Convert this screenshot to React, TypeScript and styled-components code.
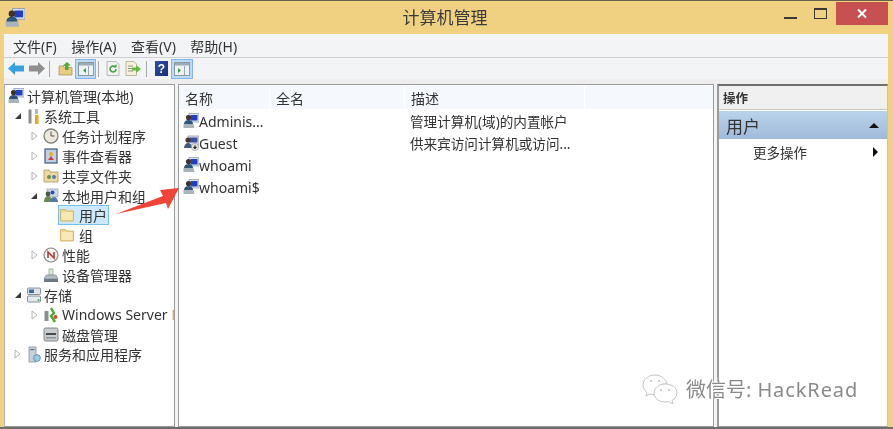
import React from 'react';
import styled, { createGlobalStyle } from 'styled-components';

const Global = createGlobalStyle`
    html, body { margin: 0; padding: 0; background: #ffffff; }
    body { font-family: "Noto Sans", "Noto Sans CJK SC", sans-serif; overflow: hidden; }
    #root { width: 893px; height: 429px; }
`;

const Win = styled.div`
    position: relative;
    width: 893px;
    height: 429px;
    box-sizing: border-box;
    background: #f0d181;
    border-top: 1px solid #6b6250;
    border-bottom: 2px solid #6d6d6d;
    display: flex;
    flex-direction: column;
    overflow: hidden;
    filter: blur(0.35px);
`;

const TitleBar = styled.div`
    height: 33px;
    flex: none;
    display: flex;
    align-items: flex-start;
    padding-left: 5px;
    position: relative;
`;

const AppIcon = styled.div`
    margin-top: 7px;
    width: 20px;
    height: 20px;
`;

const Title = styled.div`
    position: absolute;
    left: 0;
    right: 0;
    top: 6px;
    text-align: center;
    font-size: 17px;
    line-height: 22px;
    color: #3a3a3a;
    padding-right: 3px;
`;

const Controls = styled.div`
    margin-left: auto;
    display: flex;
    align-items: flex-start;
    margin-right: 5px;
`;

const MinBtn = styled.div`
    width: 13px;
    height: 2px;
    margin-top: 16px;
    background: #3d3a32;
    margin-right: 17px;
`;

const MaxBtn = styled.div`
    width: 11px;
    height: 8px;
    margin-top: 7px;
    border: 1px solid #3d3a32;
    border-top-width: 2px;
    margin-right: 9px;
`;

const CloseBtn = styled.div`
    width: 52px;
    height: 23px;
    margin-top: 1px;
    background: #c75050;
    display: flex;
    align-items: center;
    justify-content: center;
`;

const Body = styled.div`
    flex: 1;
    min-height: 0;
    margin: 0 5px 0 4px;
    background: #f3f4f6;
    display: flex;
    flex-direction: column;
`;

const MenuBar = styled.div`
    height: 24px;
    flex: none;
    box-sizing: border-box;
    display: flex;
    align-items: center;
    gap: 14.500px;
    padding-left: 9px;
    border-bottom: 1px solid #cfd0d2;
    font-size: 14px;
    color: #333;
`;

const ToolBar = styled.div`
    height: 21px;
    flex: none;
    display: flex;
    align-items: center;
    padding-left: 2px;
`;

const ToolBtn = styled.div<{ $on?: boolean; $w?: number }>`
    width: ${p => p.$w ?? 20}px;
    height: 20px;
    flex: none;
    box-sizing: border-box;
    display: flex;
    align-items: center;
    justify-content: center;
    background: ${p => (p.$on ? '#bcd9f6' : 'transparent')};
    border: 1px solid ${p => (p.$on ? '#83b5ec' : 'transparent')};
`;

const ToolSep = styled.div<{ $ml?: number; $mr?: number }>`
    width: 1px;
    height: 16px;
    background: #a8a8a8;
    margin: 0 ${p => p.$mr ?? 4}px 0 ${p => p.$ml ?? 2}px;
    flex: none;
`;

const Panes = styled.div`
    flex: 1;
    min-height: 0;
    display: flex;
    gap: 3px;
    padding-top: 5px;
    background: linear-gradient(#eeeeef, #eeeeef 5px, #f3f4f6 5px);
`;

const TreePane = styled.div`
    width: 171px;
    flex: none;
    box-sizing: border-box;
    background: #fff;
    border: 1px solid #9b9b9b;
    border-left-color: #b5b5b5;
    padding-top: 1.500px;
    overflow: hidden;
`;

const TreeRow = styled.div<{ $level: number }>`
    height: 19.850px;
    display: flex;
    align-items: center;
    padding-left: ${p => 3 + p.$level * 17}px;
    font-size: 14px;
    color: #333;
    white-space: nowrap;
    svg { flex: none; }
`;

const Twisty = styled.div<{ $w: number }>`
    width: ${p => p.$w}px;
    flex: none;
    display: flex;
    align-items: center;
    justify-content: center;
`;

const TreeLabel = styled.span`
    margin-left: 3px;
`;

const Cut = styled.span`
    color: #e0a468;
`;

const SelBox = styled.div`
    display: flex;
    align-items: center;
    box-sizing: border-box;
    height: 20px;
    width: 51px;
    background: #cde8f8;
    border: 1px solid #78c0e8;
    padding-left: 1px;
    margin-left: -2px;
`;

const ListPane = styled.div`
    width: 536px;
    flex: none;
    box-sizing: border-box;
    background: #fff;
    border: 1px solid #9b9b9b;
    overflow: hidden;
`;

const Header = styled.div`
    height: 24px;
    display: flex;
    background: linear-gradient(#f5f9fd, #f5f9fd 23px, #ffffff 23px);
    margin-top: 1px;
    font-size: 14px;
    color: #333;
`;

const HeadCell = styled.div<{ $w: number }>`
    width: ${p => p.$w}px;
    flex: none;
    box-sizing: border-box;
    padding-left: 6px;
    line-height: 25px;
    border-right: 1px solid #ffffff;
`;

const ListRow = styled.div`
    height: 22px;
    display: flex;
    align-items: center;
    font-size: 14px;
    color: #333;
`;

const NameCell = styled.div`
    width: 227px;
    flex: none;
    padding-left: 4px;
    display: flex;
    align-items: center;
`;

const DescCell = styled.div`
    font-size: 13.600px;
`;

const ActionPane = styled.div`
    flex: 1;
    box-sizing: border-box;
    background: #fff;
    border-top: 2px solid #6f6f6f;
    border-left: 2px solid #9b9b9b;
    border-bottom: 1px solid #9b9b9b;
    border-right: 1px solid #c4c4c4;
    overflow: hidden;
`;

const ActionHead = styled.div`
    height: 23px;
    background: #f0f0f0;
    border-bottom: 1px solid #c8c8c8;
    font-size: 12.500px;
    font-weight: 700;
    line-height: 25px;
    padding-left: 4px;
    color: #333;
`;

const ActionGroup = styled.div`
    height: 28px;
    margin-top: 1px;
    background: linear-gradient(#bad3eb, #9fbad9);
    display: flex;
    align-items: center;
    justify-content: space-between;
    padding: 0 8px 0 7px;
    font-size: 17px;
    color: #333;
`;

const ActionItem = styled.div`
    height: 26px;
    display: flex;
    align-items: center;
    justify-content: space-between;
    padding: 0 9px 0 34px;
    font-size: 13.500px;
    color: #333;
`;

const UpTri = styled.div`
    border: 5px solid transparent;
    border-top: none;
    border-bottom: 5px solid #111;
`;

const RightTri = styled.div`
    border: 5px solid transparent;
    border-right: none;
    border-left: 5px solid #111;
`;

const Arrow = styled.svg`
    position: absolute;
    left: 112px;
    top: 184px;
`;

const Mark = styled.div`
    position: absolute;
    left: 642px;
    top: 371px;
    display: flex;
    align-items: center;
    gap: 8px;
    font-size: 20px;
    line-height: 36px;
    color: #8a8a8a;
    text-shadow: 0 0 1px #fff, 1px 1px 0 #fff, -1px -1px 0 #fff;
`;

const MarkLatin = styled.span`
    letter-spacing: 0.900px;
    margin-left: 6px;
`;

// ---- small drawn icons ----

const Computer = ({ size = 16 }: { size?: number }) => (
    <svg width={size} height={size} viewBox="0 0 16 16">
        <rect x="6" y="0.500" width="10" height="8.500" fill="#dfe6ee" stroke="#8a97a8" strokeWidth="0.7" />
        <rect x="7.500" y="2" width="7" height="5.500" fill="#1f3fc4" />
        <circle cx="5.500" cy="4.500" r="2.600" fill="#3f3226" />
        <path d="M1 11c0-2.500 2-4 4.500-4s4.500 1.500 4.500 4z" fill="#2f5478" />
        <path d="M.5 11h10l1 4H.5z" fill="#a8b4bc" />
    </svg>
);

const Guest = () => (
    <svg width="16" height="16" viewBox="0 0 16 16">
        <rect x="5" y="1" width="11" height="9" fill="#dde1e6" stroke="#8a8f98" strokeWidth="0.7" />
        <rect x="6.500" y="2.500" width="8" height="5" fill="#3850a8" />
        <circle cx="5" cy="5" r="2.600" fill="#4a3a2a" />
        <path d="M1 13c0-3 2-5 4-5s4 2 4 5z" fill="#3d5d80" />
        <circle cx="12" cy="12" r="3.600" fill="#ececec" stroke="#777" strokeWidth="0.5" />
        <path d="M12 9.800v3M10.500 12l1.500 2 1.500-2z" fill="#222" stroke="#222" strokeWidth="0.8" />
    </svg>
);

const Folder = () => (
    <svg width="16" height="14" viewBox="0 0 16 14">
        <path d="M.5 3V1.500h5L7 3h6.500v10H.5z" fill="#f0d68c" stroke="#c9ad62" strokeWidth="0.8" />
        <rect x="1.500" y="4" width="11" height="8" fill="#fbe9b5" />
    </svg>
);

const Tools = () => (
    <svg width="14" height="17" viewBox="0 0 14 17">
        <path d="M3 1.500v14" stroke="#8c8c8c" strokeWidth="3" />
        <path d="M9.500 1v5" stroke="#b8b8b8" strokeWidth="3" />
        <rect x="8" y="7" width="3.500" height="9" fill="#e8a818" />
    </svg>
);

const Clock = () => (
    <svg width="16" height="16" viewBox="0 0 16 16">
        <circle cx="8" cy="8" r="7" fill="#eee9dc" stroke="#80807a" strokeWidth="1.300" />
        <path d="M8 3.500V8h3.500" fill="none" stroke="#555" strokeWidth="1" />
    </svg>
);

const EventLog = () => (
    <svg width="16" height="16" viewBox="0 0 16 16">
        <rect x="2" y="1" width="12" height="14" fill="#c4cfe4" stroke="#3f5587" strokeWidth="1.200" />
        <circle cx="8" cy="6" r="2" fill="#e6b020" />
        <path d="M5 12l3-4 3 4z" fill="#d0403a" />
    </svg>
);

const Share = () => (
    <svg width="16" height="15" viewBox="0 0 16 15">
        <path d="M1 4V2h5l1 2h8v10H1z" fill="#ead9a0" stroke="#a89860" strokeWidth="0.8" />
        <circle cx="6" cy="9" r="2" fill="#6a8a4a" />
        <circle cx="11" cy="9" r="2" fill="#5a7ab0" />
    </svg>
);

const Users = () => (
    <svg width="16" height="16" viewBox="0 0 16 16">
        <rect x="4" y="1" width="11" height="8" fill="#cfd8e2" stroke="#8896a8" strokeWidth="0.6" />
        <circle cx="5" cy="6" r="2.400" fill="#4a5a44" />
        <circle cx="9.500" cy="4.500" r="2" fill="#2a4fb8" />
        <path d="M1 14c0-4 2-6 4-6s4 2 4 6z" fill="#6b8a50" />
        <path d="M7 14c0-3 2-5 4-5s4 2 4 5z" fill="#5878a8" />
    </svg>
);

const Perf = () => (
    <svg width="16" height="16" viewBox="0 0 16 16">
        <circle cx="8" cy="8" r="7" fill="#f6f2ec" stroke="#888" strokeWidth="1.200" />
        <path d="M5 11V5l6 6V5" fill="none" stroke="#b8322c" strokeWidth="1.500" />
    </svg>
);

const Device = () => (
    <svg width="16" height="15" viewBox="0 0 16 15">
        <rect x="6" y="1" width="4" height="6" fill="#dfe8dc" stroke="#8a9a8a" strokeWidth="0.7" />
        <path d="M3 7h10l2 4H1z" fill="#b4bcc4" stroke="#7a828a" strokeWidth="0.6" />
        <rect x="1" y="11" width="14" height="3" fill="#6d7882" />
    </svg>
);

const Storage = () => (
    <svg width="14" height="16" viewBox="0 0 14 16">
        <rect x="0.500" y="1" width="13" height="6.500" rx="1" fill="#dce2e8" stroke="#6a7a88" strokeWidth="0.8" />
        <rect x="0.500" y="9" width="13" height="6" rx="1" fill="#e4e9ee" stroke="#6a7a88" strokeWidth="0.8" />
        <rect x="2" y="2.500" width="5" height="3.500" fill="#3a6a98" />
        <circle cx="11.500" cy="13" r="1" fill="#45b045" />
    </svg>
);

const WinServer = () => (
    <svg width="16" height="16" viewBox="0 0 16 16">
        <rect x="1.500" y="4" width="4" height="10" fill="#8a8f92" />
        <path d="M8 1l3 5-3 3 4 6" fill="none" stroke="#49a82e" strokeWidth="2.400" />
        <circle cx="12.500" cy="10" r="2" fill="#c05030" />
    </svg>
);

const Disk = () => (
    <svg width="16" height="15" viewBox="0 0 16 15">
        <rect x="1" y="1" width="14" height="13" rx="1.500" fill="#c8ccce" stroke="#6c7072" strokeWidth="0.8" />
        <rect x="3" y="6" width="10" height="2" fill="#44484a" />
        <rect x="3" y="10" width="10" height="1.500" fill="#8d9294" />
    </svg>
);

const Services = () => (
    <svg width="14" height="17" viewBox="0 0 14 17">
        <rect x="2" y="1" width="7" height="15" fill="#c8d0d8" stroke="#7a8896" strokeWidth="0.7" />
        <rect x="3.500" y="3" width="4" height="1.200" fill="#5a6a78" />
        <circle cx="10" cy="12" r="3.400" fill="#9cc8e8" stroke="#5a88b0" strokeWidth="0.8" />
    </svg>
);

const Open = () => (
    <svg width="8" height="8" viewBox="0 0 8 8"><path d="M7 1v6H1z" fill="#3c3c3c" /></svg>
);

const Closed = () => (
    <svg width="7" height="10" viewBox="0 0 7 10"><path d="M1 1l5 4-5 4z" fill="#fff" stroke="#b4b4b4" /></svg>
);

const Back = () => (
    <svg width="16" height="13" viewBox="0 0 16 13"><path d="M0 6.500L7 0v3.500h9v6H7V13z" fill="#3a9fe0" /></svg>
);

const Forward = () => (
    <svg width="16" height="13" viewBox="0 0 16 13"><path d="M16 6.500L9 0v3.500H0v6h9V13z" fill="#8e8e8e" /></svg>
);

const PanelGlyph = ({ dot }: { dot: 'left' | 'right' }) => (
    <svg width="16" height="14" viewBox="0 0 16 14">
        <rect x="0.500" y="0.500" width="15" height="13" fill="#eef2f4" stroke="#8b9aa2" />
        <rect x="1" y="1" width="14" height="2.500" fill="#9dacb5" />
        <path d="M10.500 4v9" stroke="#9aa8b0" />
        <path d={dot === 'left' ? 'M8 6v5l-3-2.500z' : 'M4 6v5l3-2.500z'} fill="#3c9a50" />
    </svg>
);

const UpFolder = () => (
    <svg width="15" height="15" viewBox="0 0 15 15">
        <path d="M1 5h4l1 1.500h8V14H1z" fill="#e8cc80" stroke="#a8904c" strokeWidth="0.7" />
        <path d="M9 1l4 3.500h-2.500V9H7V5L4.500 5z" fill="#5aa83c" />
    </svg>
);

const Refresh = () => (
    <svg width="14" height="15" viewBox="0 0 14 15">
        <path d="M1 .5h9l3 3V14.500H1z" fill="#f2f2f2" stroke="#aaa" strokeWidth="0.8" />
        <path d="M10 8a3 3 0 1 1-1-2.300" fill="none" stroke="#3da03d" strokeWidth="1.500" />
        <path d="M10.500 3v3.500H7z" fill="#3da03d" />
    </svg>
);

const Export = () => (
    <svg width="16" height="15" viewBox="0 0 16 15">
        <path d="M1 .5h8l2.500 2.500V14.500H1z" fill="#f6f0dc" stroke="#b0a88c" strokeWidth="0.8" />
        <path d="M3 5h5M3 7.500h5M3 10h5" stroke="#777" strokeWidth="0.8" />
        <path d="M7 6.500h4V4l5 4-5 4V9.500H7z" fill="#68b840" />
    </svg>
);

const Help = () => (
    <svg width="13" height="15" viewBox="0 0 13 15">
        <defs>
            <linearGradient id="hb" x1="0" y1="0" x2="1" y2="1">
                <stop offset="0" stopColor="#2f4fa8" />
                <stop offset="1" stopColor="#1b2f78" />
            </linearGradient>
        </defs>
        <rect width="13" height="15" fill="url(#hb)" />
        <text x="6.500" y="12" textAnchor="middle" fontFamily="Liberation Sans" fontWeight="700" fontSize="12" fill="#fff">?</text>
    </svg>
);

const CloseX = () => (
    <svg width="10" height="9" viewBox="0 0 10 9">
        <path d="M1 .5l8 8M9 .5l-8 8" stroke="#fff" strokeWidth="2" />
    </svg>
);

const Wechat = () => (
    <svg width="36" height="32" viewBox="0 0 36 32" fill="#fff" stroke="#c4c4c4" strokeWidth="1">
        <path d="M13 1C6.500 1 1 5.500 1 11c0 3 1.500 5.500 4 7.500L4 22l4-2c1.500.5 3 .8 5 .8 1 0 1 0 1.500-.1C13.500 14 19 9 25 10 24 5 19 1 13 1z" />
        <path d="M23 10c-6 0-11 4-11 9s5 9 11 9c1.200 0 2.500-.2 3.500-.5L31 30l-1-3.500c3-1.700 5-4.500 5-7.500 0-5-5-9-12-9z" />
        <circle cx="9" cy="7" r="1" fill="#bbb" stroke="none" />
        <circle cx="17" cy="7" r="1" fill="#bbb" stroke="none" />
        <circle cx="19" cy="16" r="1" fill="#bbb" stroke="none" />
        <circle cx="27" cy="16" r="1" fill="#bbb" stroke="none" />
    </svg>
);

// ---- data ----

const tree: { level: number; twisty?: 'open' | 'closed'; icon: React.ReactNode; label: string; cut?: string; selected?: boolean }[] = [
    { level: 0, icon: <Computer />, label: '计算机管理(本地)' },
    { level: 0, twisty: 'open', icon: <Tools />, label: '系统工具' },
    { level: 1, twisty: 'closed', icon: <Clock />, label: '任务计划程序' },
    { level: 1, twisty: 'closed', icon: <EventLog />, label: '事件查看器' },
    { level: 1, twisty: 'closed', icon: <Share />, label: '共享文件夹' },
    { level: 1, twisty: 'open', icon: <Users />, label: '本地用户和组' },
    { level: 2, icon: <Folder />, label: '用户', selected: true },
    { level: 2, icon: <Folder />, label: '组' },
    { level: 1, twisty: 'closed', icon: <Perf />, label: '性能' },
    { level: 1, icon: <Device />, label: '设备管理器' },
    { level: 0, twisty: 'open', icon: <Storage />, label: '存储' },
    { level: 1, twisty: 'closed', icon: <WinServer />, label: 'Windows Server ', cut: 'B' },
    { level: 1, icon: <Disk />, label: '磁盘管理' },
    { level: 0, twisty: 'closed', icon: <Services />, label: '服务和应用程序' },
];

const users = [
    { name: 'Adminis...', desc: '管理计算机(域)的内置帐户', icon: <Computer /> },
    { name: 'Guest', desc: '供来宾访问计算机或访问...', icon: <Guest /> },
    { name: 'whoami', desc: '', icon: <Computer /> },
    { name: 'whoami$', desc: '', icon: <Computer /> },
];

export default function App() {
    return (
        <Win>
            <Global />
            <TitleBar>
                <AppIcon><Computer size={20} /></AppIcon>
                <Title>计算机管理</Title>
                <Controls>
                    <MinBtn />
                    <MaxBtn />
                    <CloseBtn><CloseX /></CloseBtn>
                </Controls>
            </TitleBar>
            <Body>
                <MenuBar>
                    <span>文件(F)</span>
                    <span>操作(A)</span>
                    <span>查看(V)</span>
                    <span>帮助(H)</span>
                </MenuBar>
                <ToolBar>
                    <ToolBtn><Back /></ToolBtn>
                    <ToolBtn $w={21}><Forward /></ToolBtn>
                    <ToolSep $mr={5} />
                    <ToolBtn><UpFolder /></ToolBtn>
                    <ToolBtn $on $w={21}><PanelGlyph dot="left" /></ToolBtn>
                    <ToolSep />
                    <ToolBtn><Refresh /></ToolBtn>
                    <ToolBtn><Export /></ToolBtn>
                    <ToolSep $ml={3} />
                    <ToolBtn><Help /></ToolBtn>
                    <ToolBtn $on $w={22}><PanelGlyph dot="right" /></ToolBtn>
                </ToolBar>
                <Panes>
                    <TreePane>
                        {tree.map(row => (
                            <TreeRow key={row.label} $level={row.level}>
                                {row.level > 0 || row.twisty ? (
                                    <Twisty $w={row.level > 0 ? 18 : 19}>
                                        {row.twisty === 'open' && <Open />}
                                        {row.twisty === 'closed' && <Closed />}
                                    </Twisty>
                                ) : null}
                                {row.selected ? (
                                    <SelBox>{row.icon}<TreeLabel>{row.label}</TreeLabel></SelBox>
                                ) : (
                                    <>{row.icon}<TreeLabel>{row.label}{row.cut && <Cut>{row.cut}</Cut>}</TreeLabel></>
                                )}
                            </TreeRow>
                        ))}
                    </TreePane>
                    <ListPane>
                        <Header>
                            <HeadCell $w={91}>名称</HeadCell>
                            <HeadCell $w={135}>全名</HeadCell>
                            <HeadCell $w={180}>描述</HeadCell>
                        </Header>
                        {users.map(u => (
                            <ListRow key={u.name}>
                                <NameCell>{u.icon}{u.name}</NameCell>
                                <DescCell>{u.desc}</DescCell>
                            </ListRow>
                        ))}
                    </ListPane>
                    <ActionPane>
                        <ActionHead>操作</ActionHead>
                        <ActionGroup>用户<UpTri /></ActionGroup>
                        <ActionItem>更多操作<RightTri /></ActionItem>
                    </ActionPane>
                </Panes>
            </Body>
            <Arrow width="70" height="32" viewBox="0 0 70 32">
                <path d="M67 3L48 5l3 6L4 29l50-11 2 6z" fill="#f04438" />
            </Arrow>
            <Mark>
                <Wechat />
                <span>微信号:<MarkLatin>HackRead</MarkLatin></span>
            </Mark>
        </Win>
    );
}
